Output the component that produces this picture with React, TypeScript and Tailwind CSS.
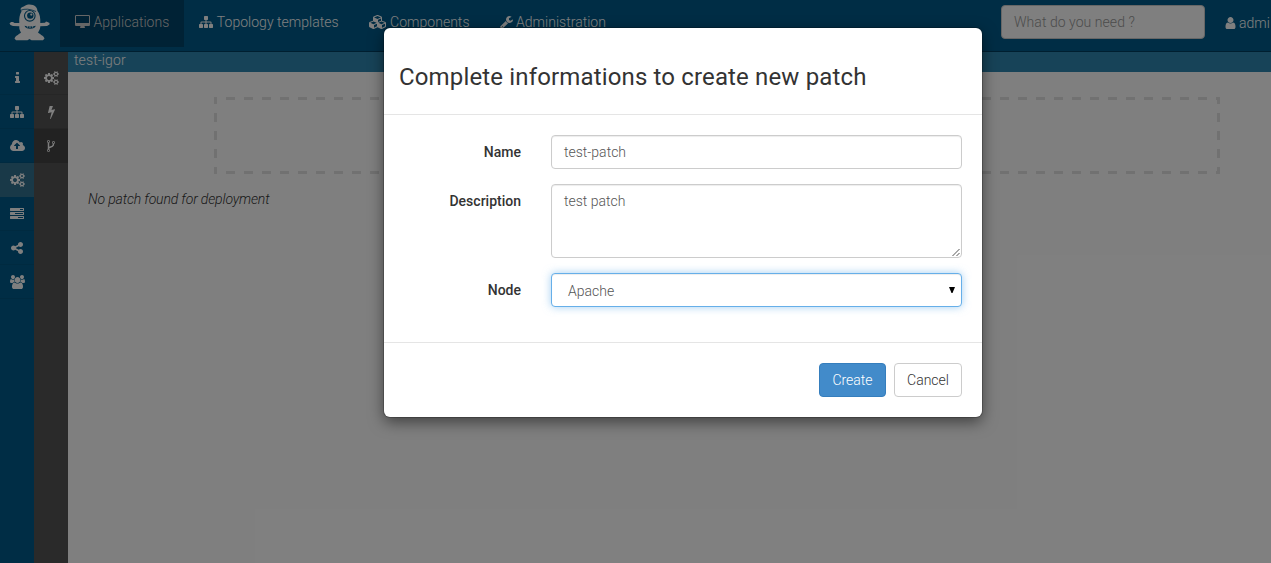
import React from 'react';

type Glyph = { d: string; w: number; x?: number };

const glyphs: Record<string, Glyph> = {
  desktop: { w: 1920, x: -64, d: 'M1728 992v-832q0-13-9.5-22.5t-22.5-9.5h-1600q-13 0-22.5 9.5t-9.5 22.5v832q0 13 9.5 22.5t22.5 9.5h1600q13 0 22.5-9.5t9.5-22.5zm128-832v1088q0 66-47 113t-113 47h-544q0 37 16 77.5t32 71 16 43.5q0 26-19 45t-45 19h-512q-26 0-45-19t-19-45q0-14 16-44t32-70 16-78h-544q-66 0-113-47t-47-113v-1088q0-66 47-113t113-47h1600q66 0 113 47t47 113z' },
  sitemap: { w: 1792, d: 'M1792 1248v320q0 40-28 68t-68 28h-320q-40 0-68-28t-28-68v-320q0-40 28-68t68-28h96v-192h-512v192h96q40 0 68 28t28 68v320q0 40-28 68t-68 28h-320q-40 0-68-28t-28-68v-320q0-40 28-68t68-28h96v-192h-512v192h96q40 0 68 28t28 68v320q0 40-28 68t-68 28h-320q-40 0-68-28t-28-68v-320q0-40 28-68t68-28h96v-192q0-52 38-90t90-38h512v-192h-96q-40 0-68-28t-28-68v-320q0-40 28-68t68-28h320q40 0 68 28t28 68v320q0 40-28 68t-68 28h-96v192h512q52 0 90 38t38 90v192h96q40 0 68 28t28 68z' },
  cubes: { w: 2304, d: 'M640 1632l384-192v-314l-384 164v342zm-64-454l404-173-404-173-404 173zm1088 454l384-192v-314l-384 164v342zm-64-454l404-173-404-173-404 173zm-448-293l384-165v-266l-384 164v267zm-64-379l441-189-441-189-441 189zm1088 518v416q0 36-19 67t-52 47l-448 224q-25 14-57 14t-57-14l-448-224q-4-2-7-4-2 2-7 4l-448 224q-25 14-57 14t-57-14l-448-224q-33-16-52-47t-19-67v-416q0-38 21.5-70t56.5-48l434-186v-400q0-38 21.5-70t56.5-48l448-192q23-10 50-10t50 10l448 192q35 16 56.5 48t21.5 70v400l434 186q36 16 57 48t21 70z' },
  wrench: { w: 1664, x: 64, d: 'M448 1472q0-26-19-45t-45-19-45 19-19 45 19 45 45 19 45-19 19-45zm644-420l-682 682q-37 37-90 37-52 0-91-37l-106-108q-38-36-38-90 0-53 38-91l681-681q39 98 114.5 173.5t173.5 114.5zm634-435q0 39-23 106-47 134-164.5 217.5t-258.5 83.5q-185 0-316.5-131.5t-131.5-316.5 131.5-316.5 316.5-131.5q58 0 121.5 16.5t107.5 46.5q16 11 16 28t-16 28l-293 169v224l193 107q5-3 79-48.5t135.5-81 70.5-35.5q15 0 23.5 10t8.5 25z' },
  user: { w: 1408, x: 192, d: 'M1536 1399q0 109-62.5 187t-150.5 78h-854q-88 0-150.5-78t-62.5-187q0-85 8.5-160.5t31.5-152 58.5-131 94-89 134.5-34.5q131 128 313 128t313-128q76 0 134.5 34.5t94 89 58.5 131 31.5 152 8.5 160.5zm-256-887q0 159-112.5 271.5t-271.5 112.5-271.5-112.5-112.5-271.5 112.5-271.5 271.5-112.5 271.5 112.5 112.5 271.5z' },
  cloud: { w: 1920, x: -64, d: 'M1216 864q0-14-9-23l-352-352q-9-9-23-9t-23 9l-351 351q-10 12-10 24 0 14 9 23t23 9h224v352q0 13 9.5 22.5t22.5 9.5h192q13 0 22.5-9.5t9.5-22.5v-352h224q13 0 22.5-9.5t9.5-22.5zm640 288q0 159-112.5 271.5t-271.5 112.5h-1088q-185 0-316.5-131.5t-131.5-316.5q0-130 70-240t188-165q-2-30-2-43 0-212 150-362t362-150q156 0 285.5 87t188.5 231q71-62 166-62 106 0 181 75t75 181q0 76-41 138 130 31 213.5 135.5t83.5 238.5z' },
  cogs: { w: 1920, d: 'M896 896q0-106-75-181t-181-75-181 75-75 181 75 181 181 75 181-75 75-181zm768 512q0-52-38-90t-90-38-90 38-38 90q0 53 37.5 90.5t90.5 37.5 90.5-37.5 37.5-90.5zm0-1024q0-52-38-90t-90-38-90 38-38 90q0 53 37.5 90.5t90.5 37.5 90.5-37.5 37.5-90.5zm-384 421v185q0 10-7 19.5t-16 10.5l-155 24q-11 35-32 76 34 48 90 115 7 11 7 20 0 12-7 19-23 30-82.5 89.5t-78.5 59.5q-11 0-21-7l-115-90q-37 19-77 31-11 108-23 155-7 24-30 24h-186q-11 0-20-7.5t-10-17.5l-23-153q-34-10-75-31l-118 89q-7 7-20 7-11 0-21-8-144-133-144-160 0-9 7-19 10-14 41-53t47-61q-23-44-35-82l-152-24q-10-1-17-9.5t-7-19.5v-185q0-10 7-19.5t16-10.5l155-24q11-35 32-76-34-48-90-115-7-11-7-20 0-12 7-20 22-30 82-89t79-59q11 0 21 7l115 90q34-18 77-32 11-108 23-154 7-24 30-24h186q11 0 20 7.5t10 17.5l23 153q34 10 75 31l118-89q8-7 20-7 11 0 21 8 144 133 144 160 0 8-7 19-12 16-42 54t-45 60q23 48 34 82l152 23q10 2 17 10.5t7 19.5zm640 533v140q0 16-149 31-12 27-30 52 51 113 51 138 0 4-4 7-122 71-124 71-8 0-46-47t-52-68q-20 2-30 2t-30-2q-14 21-52 68t-46 47q-2 0-124-71-4-3-4-7 0-25 51-138-18-25-30-52-149-15-149-31v-140q0-16 149-31 13-29 30-52-51-113-51-138 0-4 4-7 4-2 35-20t59-34 30-16q8 0 46 46.5t52 67.5q20-2 30-2t30 2q51-71 92-112l6-2q4 0 124 70 4 3 4 7 0 25-51 138 17 23 30 52 149 15 149 31zm0-1024v140q0 16-149 31-12 27-30 52 51 113 51 138 0 4-4 7-122 71-124 71-8 0-46-47t-52-68q-20 2-30 2t-30-2q-14 21-52 68t-46 47q-2 0-124-71-4-3-4-7 0-25 51-138-18-25-30-52-149-15-149-31v-140q0-16 149-31 13-29 30-52-51-113-51-138 0-4 4-7 4-2 35-20t59-34 30-16q8 0 46 46.5t52 67.5q20-2 30-2t30 2q51-71 92-112l6-2q4 0 124 70 4 3 4 7 0 25-51 138 17 23 30 52 149 15 149 31z' },
  tasks: { w: 1792, d: 'M1024 1408h640v-128h-640v128zm-384-512h1024v-128h-1024v128zm640-512h384v-128h-384v128zm512 832v256q0 26-19 45t-45 19h-1664q-26 0-45-19t-19-45v-256q0-26 19-45t45-19h1664q26 0 45 19t19 45zm0-512v256q0 26-19 45t-45 19h-1664q-26 0-45-19t-19-45v-256q0-26 19-45t45-19h1664q26 0 45 19t19 45zm0-512v256q0 26-19 45t-45 19h-1664q-26 0-45-19t-19-45v-256q0-26 19-45t45-19h1664q26 0 45 19t19 45z' },
  share: { w: 1536, x: 128, d: 'M1344 1024q133 0 226.5 93.5t93.5 226.5-93.5 226.5-226.5 93.5-226.5-93.5-93.5-226.5q0-12 2-34l-360-180q-92 86-218 86-133 0-226.5-93.5t-93.5-226.5 93.5-226.5 226.5-93.5q126 0 218 86l360-180q-2-22-2-34 0-133 93.5-226.5t226.5-93.5 226.5 93.5 93.5 226.5-93.5 226.5-226.5 93.5q-126 0-218-86l-360 180q2 22 2 34t-2 34l360 180q92-86 218-86z' },
  users: { w: 1920, d: 'M593 896q-162 5-265 128h-134q-82 0-138-40.5t-56-118.5q0-353 124-353 6 0 43.5 21t97.5 42.5 119 21.5q67 0 133-23-5 37-5 66 0 139 81 256zm1071 637q0 120-73 189.5t-194 69.5h-874q-121 0-194-69.5t-73-189.5q0-53 3.5-103.5t14-109 26.5-108.5 43-97.5 62-81 85.5-53.5 111.5-20q10 0 43 21.5t73 48 107 48 135 21.5 135-21.5 107-48 73-48 43-21.5q61 0 111.5 20t85.5 53.5 62 81 43 97.5 26.5 108.5 14 109 3.5 103.5zm-1024-1277q0 106-75 181t-181 75-181-75-75-181 75-181 181-75 181 75 75 181zm704 384q0 159-112.5 271.5t-271.5 112.5-271.5-112.5-112.5-271.5 112.5-271.5 271.5-112.5 271.5 112.5 112.5 271.5zm576 225q0 78-56 118.5t-138 40.5h-134q-103-123-265-128 81-117 81-256 0-29-5-66 66 23 133 23 59 0 119-21.5t97.5-42.5 43.5-21q124 0 124 353zm-128-609q0 106-75 181t-181 75-181-75-75-181 75-181 181-75 181 75 75 181z' },
  bolt: { w: 896, x: 448, d: 'M1333 566q18 20 7 44l-540 1157q-13 25-42 25-4 0-14-2-17-5-25.5-19t-4.5-30l197-808-406 101q-4 1-12 1-18 0-31-11-18-15-13-39l201-825q4-14 16-23t28-9h328q19 0 32 12.5t13 29.5q0 8-5 18l-171 463 396-98q8-2 12-2 19 0 34 15z' },
  fork: { w: 1024, x: 384, d: 'M672 1472q0-40-28-68t-68-28-68 28-28 68 28 68 68 28 68-28 28-68zm0-1152q0-40-28-68t-68-28-68 28-28 68 28 68 68 28 68-28 28-68zm640 128q0-40-28-68t-68-28-68 28-28 68 28 68 68 28 68-28 28-68zm96 0q0 52-26 96.5t-70 69.5q-2 287-226 414-67 38-203 81-128 40-169.5 71t-41.5 100v26q44 25 70 69.5t26 96.5q0 80-56 136t-136 56-136-56-56-136q0-52 26-96.5t70-69.5v-820q-44-25-70-69.5t-26-96.5q0-80 56-136t136-56 136 56 56 136q0 52-26 96.5t-70 69.5v497q54-26 154-57 55-17 87.5-29.5t70.5-31 59-39.5 40.5-51 28-69.5 8.5-91.5q-44-25-70-69.5t-26-96.5q0-80 56-136t136-56 136 56 56 136z' },
  info: { w: 640, x: 576, d: 'M1216 1344v128q0 26-19 45t-45 19h-512q-26 0-45-19t-19-45v-128q0-26 19-45t45-19h64v-384h-64q-26 0-45-19t-19-45v-128q0-26 19-45t45-19h384q26 0 45 19t19 45v576h64q26 0 45 19t19 45zm-128-1152v192q0 26-19 45t-45 19h-256q-26 0-45-19t-19-45v-192q0-26 19-45t45-19h256q26 0 45 19t19 45z' },
};

function Icon({ name }: { name: string }) {
  const g = glyphs[name];
  return (
    <svg width={g.w / 128} height={14} viewBox={`${g.x ?? 0} 0 ${g.w} 1792`} fill="currentColor" className="shrink-0">
      <path d={g.d} />
    </svg>
  );
}

function Logo() {
  return (
    <svg width="42" height="38" viewBox="0 0 42 38" className="shrink-0">
      <path
        fill="#fff"
        d="M11.500 5C12 3 14.500 3 16 1.800C18 .3 21 0 24 1C27 2 28.500 4.500 28.300 6.500C31 10 31.500 14 31.300 19L36 18.800 37 17.500 38.500 18 40.500 19 40.500 20.500 38 22 31.300 22.300C31.300 25 30 27 29 28.500C31 30.500 34.500 31.500 35.500 34.500L34 36.200H22.500L20.500 35 18.500 36.200H7L5.500 34.500C6.500 31.500 10 30.500 12 28.500C11 27 10 25 10.300 22.300L4 22 1.500 21 .5 19.500 2 18 4 18 5.500 19 10.300 19C10 14 10.500 11 12.500 7.500Z"
      />
      <path d="M11.500 6.300Q18 3.500 27 7.500" stroke="#005b8a" strokeWidth="0.800" fill="none" />
      <circle cx="20.800" cy="11.800" r="5.300" fill="#fff" stroke="#005b8a" strokeWidth="1.100" />
      <circle cx="21.300" cy="11.600" r="3.200" fill="#005b8a" />
      <circle cx="22.300" cy="10.600" r="1.100" fill="#fff" />
      <path d="M15.500 21.800Q21 23.300 26.800 21.800Q26 24.800 21 24.800Q16.500 24.800 15.500 21.800Z" fill="#005b8a" />
      <path d="M18.300 22V23.600M21 22.500V24M23.700 22V23.600" stroke="#fff" strokeWidth="0.900" />
    </svg>
  );
}

const nav = [
  { icon: 'desktop', label: 'Applications', active: true },
  { icon: 'sitemap', label: 'Topology templates' },
  { icon: 'cubes', label: 'Components' },
  { icon: 'wrench', label: 'Administration' },
];

const primary = ['info', 'sitemap', 'cloud', 'cogs', 'tasks', 'share', 'users'];
const secondary = ['cogs', 'bolt', 'fork'];

const label = 'w-[137px] shrink-0 pt-[7px] text-right font-medium';
const field = 'w-[411px] shrink-0 rounded border border-[#ccc] bg-white px-3 py-1.5 font-light text-[#555] shadow-[inset_0_1px_1px_rgba(0,0,0,0.075)]';

function Backdrop() {
  return <div className="absolute inset-0 bg-black/50" />;
}

function Page() {
  return (
    <div className="flex h-full w-full flex-col overflow-hidden">
      <header className="flex h-[52px] shrink-0 items-start border-b border-[#003f60] bg-[#005b8a]">
        <div className="w-[60px] shrink-0 pt-1 pl-[9px]">
          <Logo />
        </div>
        <nav className="flex tracking-[0.02px] text-white">
          {nav.map((n) => (
            <div
              key={n.label}
              className={n.active ? 'flex h-[47px] items-center gap-[3.5px] bg-[#00456a] px-[15px] pb-[3px] text-[#ccc]' : 'flex h-[47px] items-center gap-[3.5px] px-[15px] pb-[3px]'}
            >
              <Icon name={n.icon} />
              <span className="whitespace-nowrap">{n.label}</span>
            </div>
          ))}
        </nav>
        <div className="mt-[5px] ml-auto h-[34px] w-[204px] shrink-0 rounded border border-[#ccc] bg-white px-3 py-1.5 tracking-[0.05px] text-[#999]">What do you need ?</div>
        <div className="mt-[13px] ml-[20px] flex w-[46px] shrink-0 items-center gap-[3px] text-white">
          <Icon name="user" />
          <span>admi</span>
        </div>
      </header>
      <div className="flex min-h-0 flex-1">
        <aside className="flex w-[34px] shrink-0 flex-col bg-[#005b8a] pt-[9px] text-white">
          {primary.map((p) => (
            <div key={p} className={p === 'cogs' ? 'flex h-[34px] items-center justify-center bg-[#337290]' : 'flex h-[34px] items-center justify-center border-b border-[#005480]'}>
              <Icon name={p} />
            </div>
          ))}
        </aside>
        <aside className="flex w-[34px] shrink-0 flex-col bg-[#545454] pt-[9px] text-white">
          {secondary.map((p) => (
            <div key={p} className={p === 'fork' ? 'flex h-[34px] items-center justify-center bg-[#444]' : 'flex h-[34px] items-center justify-center border-b border-[#4c4c4c]'}>
              <Icon name={p} />
            </div>
          ))}
        </aside>
        <main className="flex-1 bg-white">
          <div className="h-5 bg-[#2f87b0] pl-[6px] leading-[17px] tracking-[0.1px] text-white">test-igor</div>
          <svg width="1006" height="77" className="mt-[25px] ml-[146px]" stroke="#e2e2e2" strokeWidth="3">
            <path d="M12 1.500H1006M12 75.500H1006" strokeDasharray="9 9" />
            <path d="M1.500 0V77M1004.500 0V77" strokeDasharray="9 9" strokeDashoffset="2" />
          </svg>
          <div className="mt-[15px] ml-5 leading-5 tracking-[-0.15px] text-[#333] italic">No patch found for deployment</div>
        </main>
      </div>
    </div>
  );
}

function Modal() {
  return (
    <div className="absolute top-[28px] left-[384px] flex h-[389px] w-[598px] flex-col rounded-md bg-white text-[#333] shadow-[0_5px_15px_rgba(0,0,0,0.5),0_0_0_1px_rgba(0,0,0,0.2)]">
      <div className="h-[87px] shrink-0 border-b border-[#e5e5e5] pt-[36px] pl-[15px] text-2xl leading-[27px] font-normal tracking-[0.15px]">Complete informations to create new patch</div>
      <div className="flex h-[227px] shrink-0 flex-col gap-[15px] pt-5">
        <div className="flex gap-[30px]">
          <div className={label}>Name</div>
          <div className={`${field} h-[34px]`}>test-patch</div>
        </div>
        <div className="flex gap-[30px]">
          <div className={label}>Description</div>
          <div className={`${field} flex h-[74px] justify-between pr-0 pb-0`}>
            <span>test patch</span>
            <svg width="9" height="9" className="self-end" stroke="#555" strokeWidth="1">
              <path d="M0.500 8L7.500 1M4.500 8L7.500 5" />
            </svg>
          </div>
        </div>
        <div className="flex gap-[30px]">
          <div className={label}>Node</div>
          <div className="flex h-[34px] w-[411px] shrink-0 items-center justify-between rounded border border-[#66afe9] bg-white pr-[6px] pl-4 font-light text-[#555] shadow-[inset_0_1px_1px_rgba(0,0,0,0.075),0_0_8px_rgba(102,175,233,0.6)]">
            <span className="pt-[2px]">Apache</span>
            <svg width="6" height="6">
              <path d="M0 0H6L3.500 6H2.500Z" fill="#000" />
            </svg>
          </div>
        </div>
      </div>
      <div className="flex flex-1 justify-end gap-2 border-t border-[#e5e5e5] pt-5 pr-5 font-light">
        <div className="h-[34px] w-[67px] rounded border border-[#357ebd] bg-[#428bca] py-1.5 text-center text-white">Create</div>
        <div className="h-[34px] w-[68px] rounded border border-[#ccc] bg-white py-1.5 text-center">Cancel</div>
      </div>
    </div>
  );
}

export default function App() {
  return (
    <div className="relative h-[563px] w-[1271px] overflow-hidden font-[Roboto,sans-serif] text-[14px] leading-5 font-light">
      <Page />
      <Backdrop />
      <Modal />
    </div>
  );
}
